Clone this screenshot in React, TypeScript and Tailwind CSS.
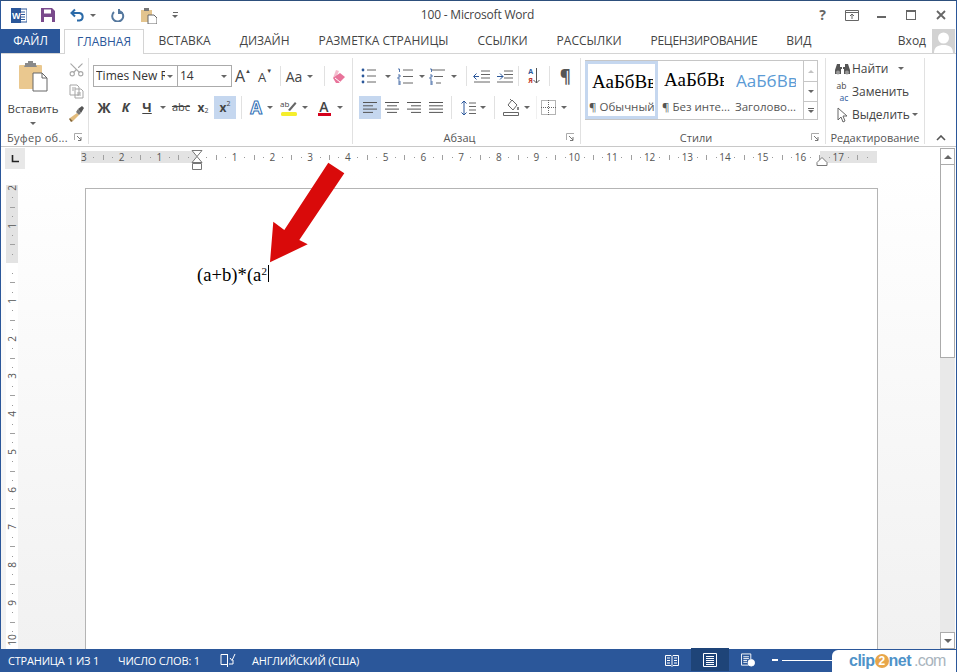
import React from "react";
import { Scissors } from "lucide-react";

const Caret = ({ className = "" }: { className?: string }) => (
  <span className={"inline-block w-0 h-0 border-x-[3px] border-t-[3px] border-x-transparent border-t-[#666] " + className} />
);
const VSep = ({ className = "" }: { className?: string }) => <span className={"w-px self-stretch bg-[#e1e1e1] " + className} />;
const Launcher = () => (
  <svg width="9" height="9" viewBox="0 0 9 9" className="shrink-0" fill="none" stroke="#777" strokeWidth="1">
    <path d="M0.5 7V0.5H8" stroke="#aaa" />
    <path d="M3 3l4 4M7 4v3.5H4" />
  </svg>
);
const GroupLabel = ({ children, launcher = true, className = "" }: { children: React.ReactNode; launcher?: boolean; className?: string }) => (
  <div className={"h-[14px] flex items-center text-[11px] leading-none text-[#555] " + className}>
    <span className="flex-1 text-center whitespace-nowrap">{children}</span>
    {launcher && <span className="w-[14px] flex justify-start"><Launcher /></span>}
  </div>
);

const Lines = ({ rows, w = 14 }: { rows: [number, number][]; w?: number }) => (
  <svg width={w} height="13" viewBox={`0 0 ${w} 13`} stroke="#555" strokeWidth="1">
    {rows.map(([a, b], i) => (
      <path key={i} d={`M${a} ${1.5 + i * 3.3}H${b}`} />
    ))}
  </svg>
);

const Bullets = () => (
  <svg width="15" height="16" viewBox="0 0 15 16">
    {[2, 8, 14].map((y) => (
      <g key={y}>
        <circle cx="2" cy={y} r="1.4" fill="#2b579a" />
        <path d={`M6 ${y}H15`} stroke="#666" />
      </g>
    ))}
  </svg>
);
const Numbered = ({ multi = false }: { multi?: boolean }) => (
  <svg width="17" height="17" viewBox="0 0 17 17">
    {[2, 8.5, 15].map((y, i) => (
      <path key={y} d={`M${multi ? 3 + i * 2 : 6} ${y}H${multi ? 16 - i * 2 : 16}`} stroke="#666" />
    ))}
    <path d="M1 1h1.5v3M1 7h2v2H1v2h2M1 13h2v4H1M1 15h2" stroke="#2b579a" strokeWidth="0.8" fill="none" />
  </svg>
);

const FontRow = () => (
  <div className="flex flex-col pt-[7px] pl-[4px] w-[264px] border-r border-[#e1e1e1]">
    <div className="flex h-[22px] items-center">
      <div className="w-[85px] h-[22px] border border-[#ababab] flex items-center pl-[2px] text-[12px] text-[#333] overflow-hidden">
        <span className="w-[69px] mr-[2px] overflow-hidden whitespace-nowrap">Times New R</span>
        <Caret />
      </div>
      <div className="w-[54px] h-[22px] border border-l-0 border-[#ababab] flex items-center pl-[2px] text-[12px] text-[#333]">
        <span className="flex-1">14</span>
        <Caret className="mr-[4px]" />
      </div>
      <span className="w-[22px] flex justify-center">
        <span className="text-[16px] leading-none text-[#444]">A</span>
        <span className="text-[6px] leading-none text-[#444]">▲</span>
      </span>
      <span className="w-[22px] flex justify-center">
        <span className="text-[13px] leading-none text-[#444] mt-[3px]">A</span>
        <span className="text-[6px] leading-none text-[#444]">▼</span>
      </span>
      <VSep className="ml-[4px] my-[1px]" />
      <span className="w-[26px] text-center text-[14px] text-[#444]">Aa</span>
      <span className="w-[6px] flex justify-center"><Caret /></span>
      <VSep className="ml-[11px] my-[1px]" />
      <span className="w-[26px] flex justify-center">
        <svg width="15" height="15" viewBox="0 0 15 15">
          <path d="M5 1l3 1-3 7H2z" fill="#f0a0b8" opacity="0.7" />
          <path d="M2 9L9 4l5 4-6 6H5z" fill="#e8739a" />
          <path d="M4 9l5 4" stroke="#fff" />
        </svg>
      </span>
    </div>
    <div className="flex h-[23px] items-center mt-[9px] text-[#444]">
      <span className="w-[22px] text-center font-bold text-[14px]">Ж</span>
      <span className="w-[21px] text-center font-bold italic text-[13px]">К</span>
      <span className="w-[22px] text-center font-bold text-[13px] underline">Ч</span>
      <span className="w-[10px] flex justify-center"><Caret /></span>
      <span className="w-[22px] ml-[2px] text-center text-[11px] line-through">abc</span>
      <span className="w-[22px] text-center text-[12px] font-bold">x<sub className="text-[7px] font-normal">2</sub></span>
      <span className="w-[22px] h-[23px] flex items-center justify-center bg-[#c5d7ef] text-[12px] font-bold">x<sup className="text-[7px] font-normal">2</sup></span>
      <VSep className="ml-[5px]" />
      <span className="w-[22px] ml-[3px] flex justify-center">
        <span className="text-[17px] leading-none font-bold text-white [-webkit-text-stroke:1px_#2f6fb6]">A</span>
      </span>
      <span className="w-[6px] flex justify-center"><Caret /></span>
      <span className="w-[22px] ml-[5px] flex justify-center">
        <svg width="18" height="18" viewBox="0 0 18 18">
          <rect x="1" y="13" width="16" height="4" rx="1.5" fill="#f5ee2c" />
          <path d="M8 11L15 3l1.5 1.5L10 12z" fill="#666" />
          <text x="0" y="8" fontSize="8" fill="#444" fontFamily="Open Sans, sans-serif">ab</text>
        </svg>
      </span>
      <span className="w-[10px] flex justify-center"><Caret /></span>
      <span className="w-[22px] ml-[3px] flex flex-col items-center">
        <span className="text-[14px] leading-[13px] font-semibold text-[#444]">A</span>
        <span className="w-[13px] h-[3px] bg-[#d5001c]" />
      </span>
      <span className="w-[10px] flex justify-center"><Caret /></span>
    </div>
  </div>
);

const C = ({ className, children }: { className: string; children: React.ReactNode }) => (
  <span className={"flex items-center justify-center " + className}>{children}</span>
);

const Group = ({ className, body, label }: { className: string; body: React.ReactNode; label: React.ReactNode }) => (
  <div className={"flex flex-col border-r border-[#e1e1e1] " + className}>
    <div className="h-[72px]">{body}</div>
    {label}
  </div>
);

const StyleItem = ({ className, sample, label }: { className: string; sample: React.ReactNode; label: string }) => (
  <div className={"flex flex-col overflow-hidden " + className}>
    <div className="h-[39px] flex items-center whitespace-nowrap overflow-hidden">{sample}</div>
    <div className="text-[11.5px] leading-[14px] text-[#555] whitespace-nowrap">{label}</div>
  </div>
);

const Ribbon = () => (
  <div className="flex h-[93px] pt-[4px] pb-[2px] border-b border-[#c8c8c8] bg-white relative">
    {/* clipboard */}
    <Group
      className="w-[88px]"
      label={
        <div className="h-[14px] flex items-center text-[11px] leading-none text-[#555] tracking-[0.3px] pl-[6px]">
          <span className="w-[67px] whitespace-nowrap">Буфер об...</span>
          <Launcher />
        </div>
      }
      body={
        <div className="flex">
          <div className="w-[64px] flex flex-col items-center pt-[3px]">
            <svg width="30" height="31" viewBox="0 0 30 31">
              <rect x="1" y="4" width="23" height="24" rx="1" fill="#eac88f" />
              <path d="M7 4V2h3V0h5v2h3v2l1 2H6z" fill="#8a8a8a" />
              <path d="M15 12h9l5 5v13H15z" fill="#fff" stroke="#666" />
              <path d="M24 12v5h5" fill="none" stroke="#666" />
            </svg>
            <span className="text-[11.5px] leading-[16px] mt-[9px] text-[#444]">Вставить</span>
            <Caret className="mt-[5px]" />
          </div>
          <div className="w-[22px] flex flex-col items-center pt-[3px] gap-[6px]">
            <Scissors size={17} strokeWidth={1.6} color="#a9a9a9" className="-rotate-90" />
            <svg width="15" height="15" viewBox="0 0 15 15" fill="#fff" stroke="#a5a5a5">
              <path d="M1 1h7l2 2v8H1zM6 5h6l2 2v7H6z" />
              <path d="M3 4h4M3 6h2M8 9h4M8 11h4" />
            </svg>
            <svg width="17" height="17" viewBox="0 0 17 17">
              <path d="M9 8L2 13l3 3 6-6z" fill="#e3bc7d" />
              <path d="M2 13l3 3-2 1-2-3z" fill="#8a6a38" />
              <path d="M10 4l4-3 2 2-3 5z" fill="#555" />
              <path d="M8 7l2-3 3 4-2 2z" fill="#777" />
            </svg>
          </div>
        </div>
      }
    />
    <FontRow />
    {/* paragraph */}
    <Group
      className="w-[228px]"
      label={<GroupLabel>Абзац</GroupLabel>}
      body={
        <div className="flex flex-col pt-[7px]">
          <div className="flex h-[22px] items-center">
            <C className="w-[30px] ml-[1px]"><Bullets /></C>
            <C className="w-[6px] ml-[1px]"><Caret /></C>
            <C className="w-[28px] ml-[1px]"><Numbered /></C>
            <C className="w-[6px]"><Caret /></C>
            <C className="w-[26px]"><Numbered multi /></C>
            <C className="w-[6px]"><Caret /></C>
            <VSep className="ml-[9px] my-[1px]" />
            <C className="w-[23px] ml-[4px]">
              <svg width="17" height="13" viewBox="0 0 17 13" stroke="#666"><path d="M8 1h9M8 4.500h9M8 8h9M1 12h16" /><path d="M6 6.500H1M3.500 3.500l-3 3 3 3" stroke="#2b579a" fill="none" /></svg>
            </C>
            <C className="w-[23px]">
              <svg width="17" height="13" viewBox="0 0 17 13" stroke="#666"><path d="M8 1h9M8 4.500h9M8 8h9M1 12h16" /><path d="M1 6.500h6M4 3.500l3 3-3 3" stroke="#2b579a" fill="none" /></svg>
            </C>
            <VSep className="ml-[2px] my-[1px]" />
            <C className="w-[31px]">
              <span className="flex flex-col text-[7px] leading-[9px] font-bold">
                <span className="text-[#2b579a]">А</span>
                <span className="text-[#c0392b]">Я</span>
              </span>
              <svg width="7" height="16" viewBox="0 0 7 16" stroke="#555" fill="none"><path d="M3.500 0v15M0.500 12l3 3 3-3" /></svg>
            </C>
            <VSep className="my-[1px]" />
            <C className="w-[30px] text-[17px] leading-none text-[#555] font-bold">¶</C>
          </div>
          <div className="flex h-[23px] items-center mt-[9px]">
            <C className="w-[22px] h-[23px] ml-[6px] bg-[#c5d7ef]"><Lines rows={[[0, 14], [0, 10], [0, 14], [0, 10]]} /></C>
            <C className="w-[22px]"><Lines rows={[[0, 14], [2, 12], [0, 14], [2, 12]]} /></C>
            <C className="w-[22px]"><Lines rows={[[0, 14], [4, 14], [0, 14], [4, 14]]} /></C>
            <C className="w-[22px]"><Lines rows={[[0, 14], [0, 14], [0, 14], [0, 14]]} /></C>
            <VSep className="ml-[4px]" />
            <C className="w-[22px] ml-[5px]">
              <svg width="15" height="16" viewBox="0 0 15 16" fill="none"><path d="M3 1v14M0.500 3.500L3 1l2.500 2.500M0.500 12.500L3 15l2.500-2.500" stroke="#2b579a" /><path d="M8 3h7M8 6.500h7M8 10h7M8 13.500h7" stroke="#666" /></svg>
            </C>
            <C className="w-[6px] ml-[1px]"><Caret /></C>
            <VSep className="ml-[8px]" />
            <C className="w-[22px] ml-[5px]">
              <svg width="16" height="19" viewBox="0 0 16 19" fill="none" stroke="#666"><path d="M5 7l4-5 5 5-4 5z" fill="#fff" /><path d="M7 1l2 2" /><path d="M15 9v3" strokeWidth="2" stroke="#888" /><path d="M0.500 14.500h15v3H0.500z" /></svg>
            </C>
            <C className="w-[6px] ml-[2px]"><Caret /></C>
            <VSep className="ml-[6px] opacity-50" />
            <C className="w-[18px] ml-[2px]">
              <svg width="15" height="15" viewBox="0 0 15 15" fill="none" stroke="#666" strokeDasharray="1 1"><path d="M0.500 0.500h14v14h-14zM7.500 0v15M0 7.500h15" /></svg>
            </C>
            <C className="w-[6px] ml-[4px]"><Caret /></C>
          </div>
        </div>
      }
    />
    {/* styles */}
    <Group
      className="w-[245px]"
      label={<GroupLabel>Стили</GroupLabel>}
      body={
        <div className="pl-[4px] pt-[2px] w-[237px]">
          <div className="h-[60px] border border-[#c6c6c6] flex">
            <div className="w-[73px] h-[58px] border-[3px] border-[#c5d7ef] pl-[4px] flex flex-col overflow-hidden -ml-px">
              <div className="h-[36px] flex items-center">
                <span className="inline-block w-[61px] overflow-hidden whitespace-nowrap font-[Liberation_Serif,serif] text-[19px] text-black leading-normal">АаБбВв</span>
              </div>
              <div className="text-[11.5px] leading-[14px] text-[#555] whitespace-nowrap -ml-[3px]">¶ Обычный</div>
            </div>
            <StyleItem
              className="w-[74px] pl-[4px]"
              sample={<span className="inline-block w-[60px] ml-[2px] overflow-hidden font-[Liberation_Serif,serif] text-[19px] text-black leading-normal">АаБбВв</span>}
              label="¶ Без инте..."
            />
            <StyleItem
              className="w-[70px] pl-[3px]"
              sample={<span className="inline-block w-[60px] ml-[1px] overflow-hidden text-[17px] leading-normal text-[#5b9bd5]">АаБбВв</span>}
              label="Заголово..."
            />
            <div className="w-[14px] flex flex-col border-l border-[#c6c6c6] ml-auto">
              <C className="h-[21px] border-b border-[#c6c6c6]"><Caret className="rotate-180 opacity-40" /></C>
              <C className="h-[20px] border-b border-[#c6c6c6]"><Caret /></C>
              <C className="flex-1 flex-col gap-[1px]"><span className="w-[6px] h-px bg-[#666]" /><Caret /></C>
            </div>
          </div>
        </div>
      }
    />
    {/* editing */}
    <Group
      className="w-[99px]"
      label={<GroupLabel launcher={false}>Редактирование</GroupLabel>}
      body={
        <div className="flex flex-col pl-[7px] text-[12px] text-[#444]">
          <div className="flex items-center h-[23px] mt-[-1px]">
            <C className="w-[19px]">
              <svg width="17" height="14" viewBox="0 0 17 14" fill="#555"><path d="M1 8l2-6h3v3h2v2H7v5H1zM16 8l-2-6h-3v3H9v2h1v5h6z" /><circle cx="4" cy="10.500" r="2" fill="#999" /><circle cx="13" cy="10.500" r="2" fill="#999" /></svg>
            </C>
            <span className="w-[46px]">Найти</span>
            <Caret />
          </div>
          <div className="flex items-center h-[23px]">
            <C className="w-[19px]">
              <span className="flex flex-col text-[8.5px] leading-[12px]">
                <span className="text-[#444]">ab</span>
                <span className="text-[#2b579a] pl-[3px]">ac</span>
              </span>
            </C>
            <span>Заменить</span>
          </div>
          <div className="flex items-center h-[23px]">
            <C className="w-[19px]">
              <svg width="12" height="16" viewBox="0 0 12 16" fill="#fff" stroke="#666"><path d="M1 1v12l3-3 2 5 2-1-2-5h4z" /></svg>
            </C>
            <span>Выделить</span>
            <Caret className="ml-[2px]" />
          </div>
        </div>
      }
    />
    <div className="flex-1 flex items-end justify-end pr-[10px] pb-[3px]">
      <svg width="10" height="6" viewBox="0 0 10 6" fill="none" stroke="#555" strokeWidth="1.6"><path d="M1 5l4-4 4 4" /></svg>
    </div>
  </div>
);

const HNums: (number | null)[] = [3, 2, 1, null, 1, 2, 3, 4, 5, 6, 7, 8, 9, 10, 11, 12, 13, 14, 15, 16, 17, null];
const VNums: (number | null)[] = [2, 1, null, 1, 2, 3, 4, 5, 6, 7, 8, 9, 10, null];

const HCell = ({ n }: { n: number | null }) => (
  <div className="w-[37.72px] shrink-0 flex items-center h-full">
    <span className="w-[9.43px] flex items-center"><span className="w-px h-[5px] bg-[#a0a0a0]" /></span>
    <span className="w-[9.43px] flex items-center"><span className="w-px h-px bg-[#999]" /></span>
    <span className="w-[9.43px] flex items-center">
      <span className="w-0 flex justify-center text-[10px] leading-none text-[#555]">{n}</span>
    </span>
    <span className="w-[9.43px] flex items-center"><span className="w-px h-px bg-[#999]" /></span>
  </div>
);
const VCell = ({ n }: { n: number | null }) => (
  <div className="h-[37.72px] shrink-0 flex flex-col items-center w-full">
    <span className="h-[9.43px] flex justify-center"><span className="w-[5px] h-px bg-[#a0a0a0]" /></span>
    <span className="h-[9.43px] flex justify-center"><span className="w-px h-px bg-[#999]" /></span>
    <span className="h-[9.43px] flex justify-center">
      <span className="h-0 flex items-center text-[10px] leading-none text-[#555] -rotate-90">{n}</span>
    </span>
    <span className="h-[9.43px] flex justify-center"><span className="w-px h-px bg-[#999]" /></span>
  </div>
);

const RulerRow = () => (
  <div className="h-[23px] flex shrink-0">
    <div className="w-[20px] h-[21px] ml-[4px] mt-[1px] bg-[#e8e8e8] flex items-center justify-center">
      <svg width="8" height="8" viewBox="0 0 8 8" fill="none" stroke="#222" strokeWidth="1.6"><path d="M1.500 0v6.500H8" /></svg>
    </div>
    <div className="w-[796px] h-[12px] ml-[56px] mt-[4px] relative bg-[linear-gradient(to_right,#e3e3e3_116px,#fff_116px,#fff_739px,#e3e3e3_739px)]">
      <div className="h-full overflow-hidden">
        <div className="flex h-full -ml-[16px]">
          {HNums.map((n, i) => (
            <HCell key={i} n={n} />
          ))}
        </div>
      </div>
      <svg width="12" height="21" viewBox="0 0 12 21" className="absolute left-[110px] -top-[1px]" fill="#fff" stroke="#777">
        <path d="M1 0.500h10L6 6.500l5 6H1l5-6z" />
        <path d="M1.500 13.500h9v6h-9z" />
      </svg>
      <svg width="12" height="9" viewBox="0 0 12 9" className="absolute left-[735px] top-[6px]" fill="#fff" stroke="#777">
        <path d="M6 0.500L11 5.500v3H1v-3z" />
      </svg>
    </div>
  </div>
);

const Doc = () => (
  <div className="flex-1 flex min-h-0 bg-linear-to-b from-[#ffffff] to-[#f1f1f1]">
    <div className="w-[84px] shrink-0 pt-[15px] pl-[5px]">
      <div className="w-[12px] h-[464px] overflow-hidden bg-[linear-gradient(to_bottom,#e3e3e3_78px,#fff_78px)]">
        <div className="flex flex-col -mt-[16px]">
          {VNums.map((n, i) => (
            <VCell key={i} n={n} />
          ))}
        </div>
      </div>
    </div>
    <div className="w-[793px] shrink-0 mt-[18px] bg-white border-x border-t border-[#b4b4b4] pl-[111px] pt-[75px] font-[Liberation_Serif,serif] text-[18.67px] leading-[22px] text-black">
      <span>(a+b)*(a</span>
      <span className="text-[11px] align-[6px] leading-none">2</span>
      <span className="inline-block w-px h-[17px] bg-black ml-[1px] align-[-1px]" />
    </div>
    <div className="flex-1" />
  </div>
);

const Scrollbar = () => (
  <div className="w-[15px] shrink-0 mt-px flex flex-col bg-[#e9e9e9]">
    <div className="h-[17px] border border-[#ababab] bg-white flex items-center justify-center">
      <Caret className="rotate-180 border-x-[4px] border-t-[4px]" />
    </div>
    <div className="h-[193px] border-x border-b border-[#ababab] bg-white" />
    <div className="flex-1" />
    <div className="h-[17px] border border-[#ababab] bg-white flex items-center justify-center">
      <Caret className="border-x-[4px] border-t-[4px]" />
    </div>
  </div>
);

const StatusBar = () => (
  <div className="h-[23px] bg-[#2b579a] flex items-center text-white text-[11px] tracking-[-0.2px] leading-none whitespace-nowrap -mx-px shrink-0 pb-[1px]">
    <span className="w-[110px] pl-[8px]">СТРАНИЦА 1 ИЗ 1</span>
    <span className="w-[103px] ml-[8px]">ЧИСЛО СЛОВ: 1</span>
    <svg width="16" height="16" viewBox="0 0 16 16" fill="none" stroke="#fff" className="-ml-[1px]">
      <path d="M7.500 2.500H1v10h6.500M7.500 2v13" />
      <path d="M9 12h4V8M10 6l2 2.500L15 2" />
    </svg>
    <span className="ml-[16px] w-[413px]">АНГЛИЙСКИЙ (США)</span>
    <C className="w-[14px]">
      <svg width="14" height="13" viewBox="0 0 14 13" fill="none" stroke="#fff"><path d="M0.500 1.500h5.500l1 1 1-1h5.500v10H8l-1 1-1-1H0.500zM7 2.500v9M2 4h3M2 6.500h3M2 9h3M9 4h3M9 6.500h3M9 9h3" /></svg>
    </C>
    <C className="w-[38px] h-[23px] bg-[#1e4478] ml-[12px] -mt-px">
      <svg width="14" height="14" viewBox="0 0 14 14" fill="none" stroke="#fff"><path d="M0.500 0.500h13v13h-13zM3 3.500h8M3 5.500h8M3 7.500h8M3 9.500h8M3 11.500h8" /></svg>
    </C>
    <C className="w-[14px] ml-[12px]">
      <svg width="15" height="14" viewBox="0 0 15 14" fill="none" stroke="#fff"><path d="M8 12.500H0.500V0.500h10V6M2.500 3.500h6M2.500 5.500h6M2.500 7.500h4M2.500 9.500h4" /><circle cx="11" cy="10" r="3.500" fill="#fff" /></svg>
    </C>
    <span className="w-[6px] h-[2px] bg-white ml-[17px]" />
    <span className="w-[50px] h-px bg-white ml-[4px]" />
  </div>
);

export default function App() {
  return (
    <div className="relative w-[957px] h-[672px] overflow-hidden bg-white flex flex-col border-x border-t border-x-[#2b579a] border-t-[#2d4f7c] font-[Open_Sans,sans-serif] text-[#444]">
      {/* title bar */}
      <div className="h-[28px] flex items-center shrink-0">
        <div className="w-[380px] flex items-center pl-[10px]">
          <svg width="16" height="15" viewBox="0 0 16 15">
            <rect x="6" y="1" width="10" height="13" fill="#fff" stroke="#2b579a" />
            <path d="M8 4h6M8 6.500h6M8 9h6M8 11.500h6" stroke="#2b579a" />
            <rect x="0" y="0" width="10" height="15" fill="#2b579a" />
            <text x="1" y="11" fontSize="9" fill="#fff" fontWeight="700" fontFamily="Liberation Sans, sans-serif">W</text>
          </svg>
          <svg width="14" height="14" viewBox="0 0 14 14" className="ml-[14px]">
            <path d="M0 0h11l3 3v11H0z" fill="#7a4a8c" />
            <rect x="3" y="1.500" width="7" height="4" fill="#fff" />
            <rect x="3" y="9" width="8" height="5" fill="#fff" />
          </svg>
          <svg width="15" height="14" viewBox="0 0 15 14" fill="none" stroke="#2b6aa8" strokeWidth="2" className="ml-[15px]">
            <path d="M5 1.500L1.500 5 5 8.500M2 5h7.500a3.800 3.800 0 010 7.500H7" />
          </svg>
          <Caret className="ml-[5px]" />
          <svg width="14" height="14" viewBox="0 0 14 14" fill="none" stroke="#55789e" strokeWidth="2" className="ml-[15px]">
            <path d="M9 2.100A5.500 5.500 0 1 1 3 3M8 0v4h4" transform="translate(0 1)" />
          </svg>
          <svg width="16" height="17" viewBox="0 0 16 17" className="ml-[16px]">
            <rect x="0" y="3" width="11" height="12" fill="#e3c48e" />
            <rect x="3" y="1" width="5" height="3" fill="#777" />
            <path d="M7 8h6l3 3v6H7z" fill="#fff" stroke="#666" />
          </svg>
          <span className="ml-[15px] flex flex-col items-center gap-[2px]">
            <span className="w-[5px] h-px bg-[#666]" />
            <Caret />
          </span>
        </div>
        <div className="w-[193px] text-[12px] tracking-[-0.2px] text-[#444] text-center whitespace-nowrap">100 - Microsoft Word</div>
        <div className="flex-1 flex items-center justify-end">
          <span className="text-[14px] font-bold leading-none text-[#666] mr-[19px]">?</span>
          <svg width="14" height="11" viewBox="0 0 14 11" fill="none" stroke="#666" className="mr-[18px]">
            <path d="M0.500 0.500h13v10h-13zM0.500 2.500h13M7 9V4.500M5 6l2-2 2 2" />
          </svg>
          <span className="w-[9px] h-[2px] bg-[#666] mr-[20px] mt-[3px]" />
          <span className="w-[10px] h-[10px] border border-[#666] border-t-2 mr-[20px]" />
          <svg width="10" height="10" viewBox="0 0 10 10" stroke="#666" strokeWidth="1.800" className="mr-[10px]">
            <path d="M1 1l8 8M9 1l-8 8" />
          </svg>
        </div>
      </div>
      {/* tabs */}
      <div className="h-[25px] flex border-b border-[#d4d4d4] shrink-0 text-[12px] leading-none whitespace-nowrap text-[#444]">
        <div className="w-[59px] h-[24px] bg-[#2b579a] text-white flex items-center justify-center">ФАЙЛ</div>
        <div className="w-[80px] h-[25px] ml-[4px] bg-white border-x border-t border-[#d4d4d4] text-[#2b579a] flex items-center justify-center">ГЛАВНАЯ</div>
        <div className="flex items-center h-[24px]">
          <span className="px-[14.5px]">ВСТАВКА</span>
          <span className="px-[14.5px]">ДИЗАЙН</span>
          <span className="px-[14.5px]">РАЗМЕТКА СТРАНИЦЫ</span>
          <span className="px-[14.5px]">ССЫЛКИ</span>
          <span className="px-[14.5px]">РАССЫЛКИ</span>
          <span className="px-[14.5px] tracking-[-0.3px]">РЕЦЕНЗИРОВАНИЕ</span>
          <span className="px-[14.5px]">ВИД</span>
        </div>
        <div className="flex-1 flex items-center justify-end h-[24px]">
          <span className="mr-[6px]">Вход</span>
          <svg width="23" height="24" viewBox="0 0 23 24" className="mr-px">
            <rect width="23" height="24" fill="#d2d2d2" />
            <circle cx="11.500" cy="9" r="5.500" fill="#fff" />
            <path d="M2 24c0-6 4-8 9.500-8s9.500 2 9.500 8z" fill="#fff" />
          </svg>
        </div>
      </div>
      <Ribbon />
      {/* workspace */}
      <div className="flex-1 flex min-h-0">
        <div className="w-[939px] shrink-0 flex flex-col min-h-0">
          <RulerRow />
          <Doc />
        </div>
        <Scrollbar />
      </div>
      <StatusBar />

      {/* annotation arrow */}
      <svg width="957" height="672" viewBox="0 0 957 672" className="absolute -left-px -top-px pointer-events-none">
        <polygon points="328.300,162.700 344.300,173.300 299.300,240 307.700,244.300 270,262.300 273.300,221.700 284.300,230" fill="#d90a0a" />
      </svg>
      {/* watermark */}
      <div className="absolute -right-px bottom-0 w-[125px] h-[22px] bg-white rounded-tl-[6px] flex items-center pl-[17px] font-[Liberation_Sans,sans-serif] text-[16px] leading-none tracking-[-0.5px] whitespace-nowrap">
        <span className="font-bold text-[#4f93c9]">clip</span>
        <span className="w-[14px] h-[14px] rounded-full bg-[#e8a64a] text-white font-bold text-[12px] flex items-center justify-center">2</span>
        <span className="font-bold text-[#4f93c9]">net</span>
        <span className="text-[#a9b4bd] ml-[3px] tracking-[-0.8px]">.com</span>
      </div>
    </div>
  );
}
